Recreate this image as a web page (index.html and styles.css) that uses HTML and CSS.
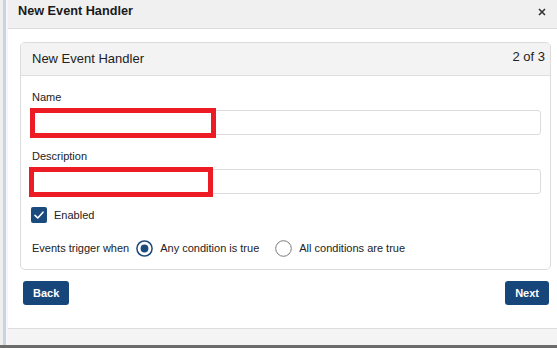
FILE: index.html
```html
<!DOCTYPE html>
<html lang="en">
<head>
<meta charset="utf-8">
<title>New Event Handler</title>
<link rel="stylesheet" href="styles.css">
</head>
<body>
<div class="screen">
  <div class="workspace">
    <div class="gutter"></div>
    <div class="modal">
      <div class="modal-header">
        <span class="modal-title">New Event Handler</span>
        <svg class="close" width="8" height="8" viewBox="0 0 8 8"><path d="M1 1 L7 7 M7 1 L1 7" stroke="#333" stroke-width="1.6" fill="none"/></svg>
      </div>
      <div class="modal-body">
        <div class="card">
          <div class="card-header">
            <span class="card-title">New Event Handler</span>
            <span class="card-step">2 of 3</span>
          </div>
          <div class="card-body">
            <div class="field">
              <div class="label">Name</div>
              <div class="input"><span class="redact redact-name"></span></div>
            </div>
            <div class="field field-next">
              <div class="label">Description</div>
              <div class="input"><span class="redact redact-desc"></span></div>
            </div>
            <div class="check-row">
              <span class="checkbox">
                <svg width="16" height="16" viewBox="0 0 16 16"><path d="M4 8.3 L6.8 11 L12 5.2" stroke="#fff" stroke-width="1.6" fill="none" stroke-linecap="round" stroke-linejoin="round"/></svg>
              </span>
              <span class="text">Enabled</span>
            </div>
            <div class="radio-row">
              <span class="text lead">Events trigger when</span>
              <svg class="radio" width="17" height="17" viewBox="0 0 17 17"><circle cx="8.5" cy="8.5" r="7.6" fill="#fff" stroke="#1b4a7c" stroke-width="1.5"/><circle cx="8.5" cy="8.5" r="3.9" fill="#1b4a7c"/></svg>
              <span class="text">Any condition is true</span>
              <svg class="radio radio-second" width="17" height="17" viewBox="0 0 17 17"><circle cx="8.5" cy="8.5" r="7.8" fill="#fff" stroke="#7a7a7a" stroke-width="1"/></svg>
              <span class="text">All conditions are true</span>
            </div>
          </div>
        </div>
        <div class="actions">
          <button class="btn">Back</button>
          <button class="btn">Next</button>
        </div>
      </div>
      <div class="modal-footer"></div>
    </div>
  </div>
  <div class="taskbar"></div>
</div>
</body>
</html>
```

FILE: styles.css
```css
html, body {
  margin: 0;
  padding: 0;
}
body {
  width: 557px;
  height: 348px;
  overflow: hidden;
  font-family: "Liberation Sans", Arial, sans-serif;
  color: #222;
  background: #fff;
}
.screen {
  display: flex;
  flex-direction: column;
  height: 348px;
}
.workspace {
  flex: 1;
  display: flex;
  min-height: 0;
}
.gutter {
  width: 8px;
  flex: none;
  background: linear-gradient(to right, #efefef 0 3px, #c9d3e3 3px 6px, #f6f6f6 6px 8px);
}
.modal {
  flex: 1;
  display: flex;
  flex-direction: column;
  background: #fff;
}
.modal-header {
  height: 29px;
  flex: none;
  box-sizing: border-box;
  background: #f0f0f0;
  border-bottom: 1px solid #dcdcdc;
  display: flex;
  justify-content: space-between;
  align-items: flex-start;
  padding: 4px 11px 0 10px;
}
.modal-title {
  font-size: 12.7px;
  line-height: 15px;
  font-weight: bold;
  color: #1a1a1a;
}
.close {
  margin-top: 4px;
}
.modal-body {
  flex: 1;
  padding: 13px 6px 0 12px;
}
.card {
  border: 1px solid #dcdcdc;
  border-radius: 5px;
  overflow: hidden;
}
.card-header {
  height: 33px;
  box-sizing: border-box;
  background: #f3f3f3;
  border-bottom: 1px solid #dedede;
  display: flex;
  justify-content: space-between;
  align-items: flex-start;
  padding: 6px 5px 0 11px;
  font-size: 13px;
  line-height: 15px;
  color: #222;
}
.card-title {
  margin-top: 2px;
}
.card-body {
  padding: 15px 9px 12px 9px;
}
.label {
  font-size: 11px;
  line-height: 13px;
  padding-left: 2px;
  margin-bottom: 6px;
  color: #222;
}
.field-next {
  margin-top: 15px;
}
.input {
  position: relative;
  height: 25px;
  box-sizing: border-box;
  border: 1px solid #dcdce0;
  border-radius: 3px;
  background: #fff;
}
.redact {
  position: absolute;
  box-sizing: border-box;
  border: 5px solid #ed1c24;
  height: 30px;
}
.redact-name {
  top: -3px;
  left: -1px;
  width: 186px;
}
.redact-desc {
  top: -3px;
  left: -2px;
  width: 184px;
}
.text {
  font-size: 11px;
  line-height: 13px;
  color: #222;
}
.check-row {
  margin-top: 13px;
  display: flex;
  align-items: center;
  gap: 7px;
  padding-left: 1px;
}
.checkbox {
  width: 16px;
  height: 16px;
  border-radius: 2px;
  background: #1b4a7c;
  display: flex;
}
.radio-row {
  margin-top: 17px;
  display: flex;
  align-items: center;
  padding-left: 2px;
  gap: 7px;
}
.radio-second {
  margin-left: 9px;
}
.actions {
  margin-top: 11px;
  display: flex;
  justify-content: space-between;
  padding: 0 2px 0 3px;
}
.btn {
  height: 24px;
  padding: 0 10px;
  border: none;
  border-radius: 3px;
  background: #16467a;
  color: #fff;
  font-family: "Liberation Sans", Arial, sans-serif;
  font-weight: bold;
  font-size: 11px;
}
.modal-footer {
  height: 16px;
  flex: none;
  border-top: 1px solid #dcdcdc;
  background: #f4f4f4;
}
.taskbar {
  height: 3px;
  flex: none;
  background: #6b6b6b;
}
```
